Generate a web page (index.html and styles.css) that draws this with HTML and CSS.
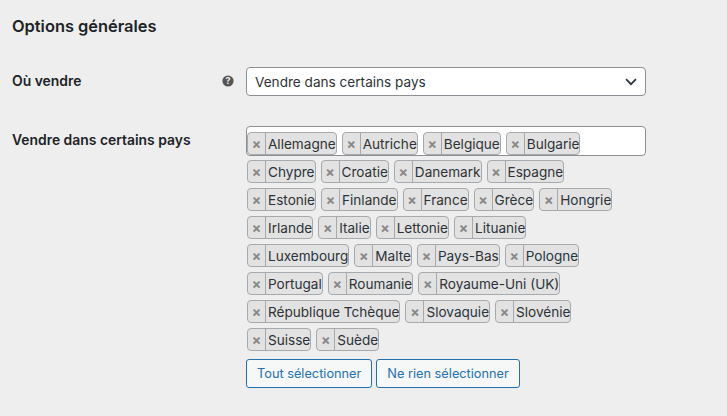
FILE: index.html
```html
<!DOCTYPE html>
<html lang="fr">
<head>
<meta charset="utf-8">
<title>Options générales</title>
<link rel="stylesheet" href="styles.css">
</head>
<body>
<h2 class="title">Options générales</h2>
<div class="row row-select">
  <div class="label">Où vendre</div>
  <div class="help">
    <svg width="12" height="12" viewBox="0 0 12 12"><circle cx="6" cy="6" r="5.6" fill="#555"/><text x="6" y="9.2" text-anchor="middle" class="help-mark">?</text></svg>
  </div>
  <div class="field">
    <div class="select">
      <span>Vendre dans certains pays</span>
      <svg class="chev" width="12" height="8" viewBox="0 0 12 8"><path d="M1 1.2 6 6.2 11 1.2" fill="none" stroke="#2c3338" stroke-width="1.7"/></svg>
    </div>
  </div>
</div>
<div class="row">
  <div class="label">Vendre dans certains pays</div>
  <div class="help"></div>
  <div class="field">
    <div class="multi">
      <div class="tags">
        <span class="tag"><i>×</i><b>Allemagne</b></span>
        <span class="tag"><i>×</i><b>Autriche</b></span>
        <span class="tag"><i>×</i><b>Belgique</b></span>
        <span class="tag"><i>×</i><b>Bulgarie</b></span>
        <span class="tag"><i>×</i><b>Chypre</b></span>
        <span class="tag"><i>×</i><b>Croatie</b></span>
        <span class="tag"><i>×</i><b>Danemark</b></span>
        <span class="tag"><i>×</i><b>Espagne</b></span>
        <span class="tag"><i>×</i><b>Estonie</b></span>
        <span class="tag"><i>×</i><b>Finlande</b></span>
        <span class="tag"><i>×</i><b>France</b></span>
        <span class="tag"><i>×</i><b>Grèce</b></span>
        <span class="tag"><i>×</i><b>Hongrie</b></span>
        <span class="tag"><i>×</i><b>Irlande</b></span>
        <span class="tag"><i>×</i><b>Italie</b></span>
        <span class="tag"><i>×</i><b>Lettonie</b></span>
        <span class="tag"><i>×</i><b>Lituanie</b></span>
        <span class="tag"><i>×</i><b>Luxembourg</b></span>
        <span class="tag"><i>×</i><b>Malte</b></span>
        <span class="tag"><i>×</i><b>Pays-Bas</b></span>
        <span class="tag"><i>×</i><b>Pologne</b></span>
        <span class="tag"><i>×</i><b>Portugal</b></span>
        <span class="tag"><i>×</i><b>Roumanie</b></span>
        <span class="tag"><i>×</i><b>Royaume-Uni (UK)</b></span>
        <span class="tag"><i>×</i><b>République Tchèque</b></span>
        <span class="tag"><i>×</i><b>Slovaquie</b></span>
        <span class="tag"><i>×</i><b>Slovénie</b></span>
        <span class="tag"><i>×</i><b>Suisse</b></span>
        <span class="tag"><i>×</i><b>Suède</b></span>
      </div>
    </div>
    <div class="actions">
      <button class="btn">Tout sélectionner</button>
      <button class="btn">Ne rien sélectionner</button>
    </div>
  </div>
</div>
</body>
</html>
```

FILE: styles.css
```css
html, body {
  margin: 0;
  height: 416px;
  overflow: hidden;
}
body {
  background: #eeeeee;
  color: #1d2327;
  font-family: Inter, "Liberation Sans", sans-serif;
  font-size: 14px;
  padding: 16px 0 0 12px;
  box-sizing: border-box;
}
.title {
  margin: 0 0 31px;
  font-size: 16.4px;
  line-height: 20px;
  font-weight: 600;
}
.row {
  display: flex;
  align-items: flex-start;
}
.row-select {
  margin-bottom: 30px;
}
.label {
  width: 210px;
  font-weight: 600;
  font-size: 13.9px;
  line-height: 20px;
  padding-top: 4px;
}
.help {
  width: 24px;
  height: 20px;
  padding-top: 3px;
  flex: none;
}
.help svg {
  display: block;
  margin: 5px 0 0 0;
}
.help-mark {
  fill: #eee;
  font-size: 9px;
  font-weight: 700;
}
.field {
  width: 400px;
}
.select {
  height: 29px;
  box-sizing: border-box;
  background: #fff;
  border: 1px solid #8c8f94;
  border-radius: 4px;
  padding: 0 8px 0 8px;
  display: flex;
  align-items: center;
  justify-content: space-between;
  color: #2c3338;
  font-size: 13.6px;
}
.multi {
  height: 30px;
  box-sizing: border-box;
  background: #fff;
  border: 1px solid #8c8f94;
  border-radius: 4px;
}
.tags {
  display: flex;
  flex-wrap: wrap;
  gap: 5px;
  padding: 5px 0 0 0;
  width: 376px;
}
.tag {
  display: flex;
  height: 23px;
  box-sizing: border-box;
  background: #e2e2e2;
  border: 1px solid #a7aaad;
  border-radius: 4px;
  line-height: 22px;
  color: #2c3338;
}
.tag i {
  width: 17px;
  text-align: center;
  font-style: normal;
  font-weight: 700;
  font-size: 14px;
  color: #888;
  border-right: 1px solid #a7aaad;
}
.tag b {
  font-weight: 400;
  font-size: 13.58px;
  padding: 0 0 0 2px;
}
.actions {
  display: flex;
  gap: 4px;
  margin-top: 203px;
}
.btn {
  height: 29px;
  box-sizing: border-box;
  padding: 0 10px;
  background: #f6f7f7;
  border: 1px solid #2271b1;
  border-radius: 3px;
  color: #2271b1;
  font: 400 12.75px Inter, "Liberation Sans", sans-serif;
}
```
